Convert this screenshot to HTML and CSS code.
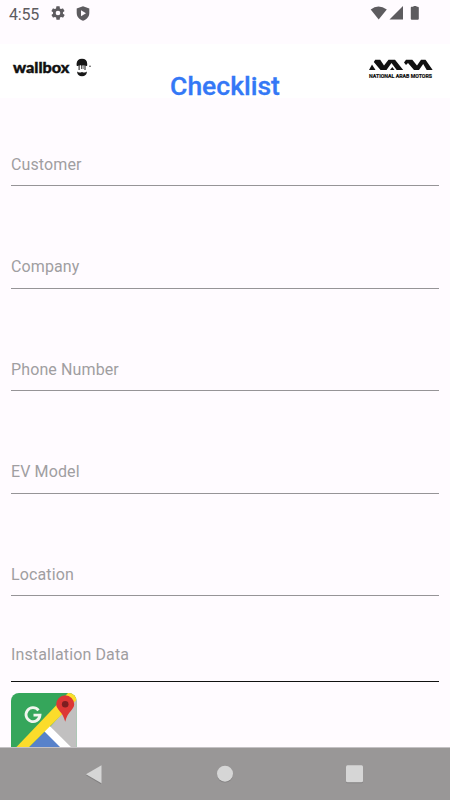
FILE: index.html
```html
<!DOCTYPE html>
<html lang="en">
<head>
<meta charset="utf-8">
<title>Checklist</title>
<link rel="stylesheet" href="styles.css">
</head>
<body>
<div class="screen">
  <div class="status">
    <span class="time">4:55</span>
    <svg class="gear" width="16" height="16" viewBox="0 0 24 24"><path fill="#5d5b5f" d="M19.4 13a7 7 0 0 0 0-2l2.1-1.6a.5.5 0 0 0 .1-.7l-2-3.4a.5.5 0 0 0-.6-.2l-2.5 1a7 7 0 0 0-1.7-1L14.5 2.400a.5.5 0 0 0-.5-.4h-4a.5.5 0 0 0-.5.4l-.4 2.700a7 7 0 0 0-1.7 1l-2.500-1a.5.5 0 0 0-.6.2l-2 3.400a.5.5 0 0 0 .1.700L4.600 11a7 7 0 0 0 0 2l-2.100 1.600a.5.5 0 0 0-.1.700l2 3.400c.1.200.4.300.6.200l2.500-1a7 7 0 0 0 1.700 1l.4 2.700c0 .2.200.4.500.4h4c.3 0 .5-.2.500-.4l.4-2.700a7 7 0 0 0 1.700-1l2.500 1c.2.100.5 0 .6-.2l2-3.400a.5.5 0 0 0-.1-.7zM12 15.500a3.500 3.500 0 1 1 0-7 3.500 3.500 0 0 1 0 7z"/></svg>
    <svg class="shield" width="14" height="15" viewBox="0 0 14 15"><path fill="#5d5b5f" d="M7 .2 13.300 2.600V7c0 3.800-2.600 6.500-6.300 7.800C3.300 13.500.7 10.800.7 7V2.600z"/><path fill="#fffbff" d="M5 4.200v6l5-3z"/></svg>
    <svg class="signals" width="50" height="16" viewBox="0 0 50 16"><g fill="#5d5b5f"><path d="M.7 3.600Q8.200-2.600 16.800 3.600L8.700 13.500z"/><path d="M33 0v13.500H19.500z"/><path d="M41.500.8h2V0h3v.8h1.300q1 0 1 1v11q0 1-1 1h-6q-1 0-1-1v-11q0-1 .7-1z"/></g></svg>
  </div>
  <header class="header">
    <svg class="wallbox" width="82" height="22" viewBox="0 0 82 22">
      <text class="wordmark" x="3" y="14.800" textLength="56.500" lengthAdjust="spacingAndGlyphs">wallbox</text>
      <g fill="#171717"><path d="M66.600 7.500V5.500Q67 .7 72 .7t5.200 5v1.800q-1 1-2 .1-1.500-.8-3.200 0-1.700-.8-3.200 0-1.200.9-2.200-.1z"/><path d="M68.600 7h1v5h-1zM74.500 7h1v5h-1zM71 7h.7v4H71zM72.700 7h.7v4h-.7z"/><path d="M67 13.500q2 1.900 5 .5 3 1.400 5-.5-.5 4.600-5 4.800-4.500-.2-5-4.800z"/><circle cx="80" cy="8.300" r=".7"/></g>
    </svg>
    <h1 class="title">Checklist</h1>
    <svg class="nam" width="66" height="24" viewBox="0 0 66 24">
      <g fill="#111">
        <path d="M1 13 4 7.500 7.500 13z"/>
        <path d="M5.800 5 7.200 2.800h5L16 8.500l4.500-5.700H27L35.200 13H28.700L23.500 6 18.500 13h-6z"/>
        <path d="M22 13 24.300 10 26.500 13z"/>
        <path d="M36 5.500 38 2.800h6.300L49 8.500l4-5.700h4.500L64.700 13h-6l-3.500-6L51 13h-5l-6-7-2 2z"/>
      </g>
      <text class="nam-text" x="1" y="21" textLength="63" lengthAdjust="spacingAndGlyphs">NATIONAL ARAB MOTORS</text>
    </svg>
  </header>
  <main class="form">
    <div class="field first"><span>Customer</span></div>
    <div class="field"><span>Company</span></div>
    <div class="field"><span>Phone Number</span></div>
    <div class="field"><span>EV Model</span></div>
    <div class="field"><span>Location</span></div>
    <div class="field date"><span>Installation Data</span></div>
    <svg class="map" width="66" height="66" viewBox="0 0 66 66">
      <defs><clipPath id="tile"><rect width="65.500" height="66" rx="8"/></clipPath></defs>
      <g clip-path="url(#tile)">
        <path fill="#35a65b" d="M0 0h66v66H0z"/>
        <path fill="#c1c0c0" d="M66 4v62H10z"/>
        <path fill="#5882ca" d="M34.300 38 62 66H6z"/>
        <path fill="#fff" d="m33 38 5.500-5.300L72 66H61z"/>
        <path fill="#fbdc2b" d="M57 0h9v6.500L6 66H-6z"/>
      </g>
      <path fill="none" stroke="#f1f5ee" stroke-width="2.800" d="M27.500 17.300A7 7 0 1 0 29 22.200h-6.500"/>
      <path fill="#dd3735" d="M54.200 2.300a9 9 0 0 1 9 9c0 5.500-6.500 7-9 17.500-2.500-10.500-9-12-9-17.500a9 9 0 0 1 9-9z"/>
      <circle cx="54.200" cy="11.300" r="3.300" fill="#7d1e20"/>
    </svg>
  </main>
  <nav class="nav">
    <svg width="450" height="52" viewBox="0 0 450 52"><g fill="#828081"><path d="m86 27.200 15-9v18z"/><circle cx="225" cy="26.500" r="8"/><rect x="346" y="18.300" width="17" height="17" rx="1.500"/></g><g fill="#d6d6d6"><path d="m86 26.200 15.500-9v18z"/><circle cx="225" cy="25.700" r="8"/><rect x="346" y="17.300" width="17" height="17" rx="1.500"/></g></svg>
  </nav>
</div>
</body>
</html>
```
FILE: styles.css
```css
* { box-sizing: border-box; }
body { margin: 0; font-family: Roboto, "Liberation Sans", sans-serif; }
svg { display: block; flex: none; }
.screen { width: 450px; height: 800px; display: flex; flex-direction: column; overflow: hidden; background: #fffbff; }
.status { height: 44px; flex: none; display: flex; align-items: flex-start; padding: 6px 30px 0 9px; }
.time { width: 41px; font-size: 16px; line-height: 17px; color: #5d5b5f; letter-spacing: -0.2px; }
.gear { margin-top: -1px; }
.shield { margin-left: 10px; }
.signals { margin-left: auto; }
.header { height: 54px; flex: none; display: grid; grid-template-columns: 1fr auto 1fr; padding: 0 16px 0 10px; background: #fff; }
.wallbox { margin-top: 14px; }
.wordmark { font: 900 15px Lato, sans-serif; fill: #111; stroke: #111; stroke-width: .4px; }
.title { margin: 27px 0 0 6px; font-size: 26.500px; line-height: 30px; font-weight: 500; color: #3478f6; -webkit-text-stroke: .3px #3478f6; }
.nam { margin-top: 13px; justify-self: end; overflow: visible; }
.nam-text { font: 700 5.500px Roboto, sans-serif; fill: #111; stroke: #111; stroke-width: .2px; }
.form { flex: 1; min-height: 0; overflow: hidden; padding: 0 11px; }
.field { height: 102.500px; display: flex; align-items: flex-end; padding-bottom: 10.500px; border-bottom: 1px solid #969497; font-size: 16px; line-height: 20px; letter-spacing: .12px; color: #a09ea1; }
.field.first { height: 88px; padding-bottom: 10px; }
.field.date { height: 86px; padding-bottom: 16px; border-color: #111; }
.map { margin-top: 11px; }
.nav { height: 53px; flex: none; background: #999797; border-top: 1px solid #c4c1c4; }
```
